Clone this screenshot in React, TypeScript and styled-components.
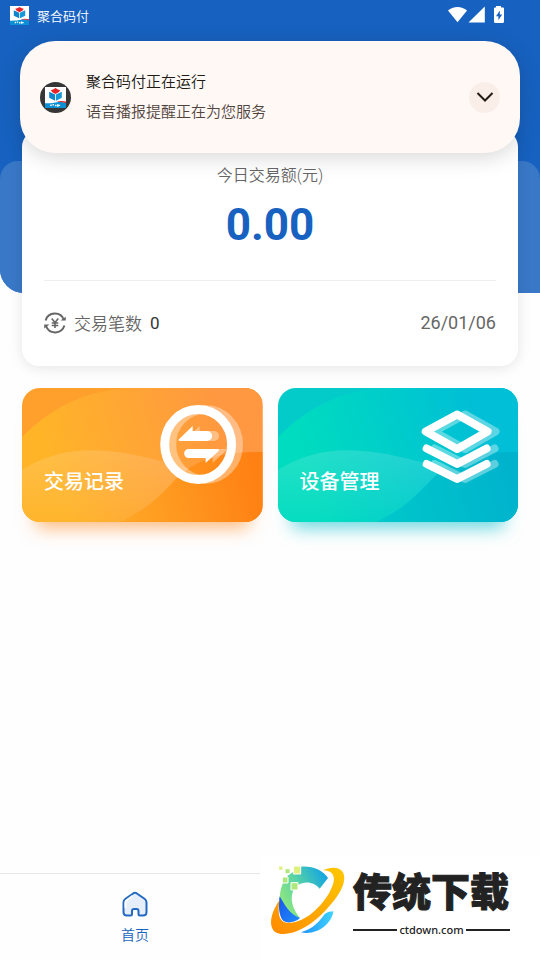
import React from "react";
import styled, { createGlobalStyle } from "styled-components";

const GlobalStyle = createGlobalStyle`
  * { box-sizing: border-box; }
  body {
    margin: 0;
    background: #fefefe;
    font-family: Roboto, "Noto Sans CJK SC", sans-serif;
    font-weight: 350;
  }
  button { font-family: inherit; border: 0; padding: 0; background: none; cursor: pointer; }
`;

const Page = styled.div`
  position: relative;
  min-height: 100vh;
  display: flex;
  flex-direction: column;
`;

const Hero = styled.header`
  display: flex;
  flex-direction: column;
  justify-content: space-between;
  height: 293px;
  background: #1762c0;
  border-bottom-left-radius: 24px;
`;

const StatusBar = styled.div`
  display: flex;
  align-items: center;
  gap: 8px;
  height: 30px;
  padding: 0 36px 0 10px;
  color: #fff;
  font-size: 13px;
`;

const StatusIcons = styled.div`
  display: flex;
  margin-left: auto;
`;

const HeroPanel = styled.div`
  height: 132px;
  background: #3978c7;
  border-radius: 18px 18px 0 24px;
`;

const Main = styled.main`
  position: relative;
  flex: 1;
  display: flex;
  flex-direction: column;
  gap: 22px;
  margin-top: -163px;
  padding: 0 22px;
`;

const Summary = styled.section`
  display: flex;
  flex-direction: column;
  padding: 34px 22px 0;
  border-radius: 17px;
  background: #fff;
  box-shadow: 0 2px 14px rgba(0, 0, 0, 0.1);
  text-align: center;
`;

const SummaryTitle = styled.h1`
  margin: 0;
  color: #666;
  font-size: 16px;
  font-weight: 350;
  line-height: 24px;
`;

const Amount = styled.p`
  margin: 0;
  padding: 11px 0 28px;
  color: #1762c0;
  font-size: 44px;
  font-weight: 700;
  line-height: 53px;
`;

const SummaryRow = styled.div`
  display: flex;
  align-items: center;
  gap: 8px;
  height: 86px;
  padding-bottom: 2px;
  border-top: 1px solid #efefef;
  color: #666;
  font-size: 17px;
`;

const Count = styled.span`
  color: #333;
  font-weight: 400;
`;

const DateText = styled.time`
  margin-left: auto;
  font-size: 18px;
  font-weight: 400;
`;

const Tiles = styled.div`
  display: grid;
  grid-template-columns: 1fr 1fr;
  gap: 15px;
`;

const Tile = styled.button<{ $glow: string }>`
  position: relative;
  display: flex;
  height: 134px;
  padding: 79px 22px 0;
  border-radius: 18px;
  box-shadow: 0 20px 18px -14px ${(p) => p.$glow};
  color: #fff;
  font-size: 20px;
  font-weight: 500;
  line-height: 30px;
`;

const TileArt = styled.svg`
  position: absolute;
  inset: 0;
  width: 100%;
  height: 100%;
  border-radius: 18px;
`;

const TileLabel = styled.span`
  position: relative;
`;

const TabBar = styled.nav`
  display: grid;
  grid-template-columns: 1fr 1fr;
  height: 87px;
  border-top: 1px solid #e6e6e6;
`;

const Tab = styled.a`
  display: flex;
  flex-direction: column;
  align-items: center;
  gap: 6px;
  padding-top: 16px;
  color: #1762c0;
  font-size: 14px;
  line-height: 22px;
  text-decoration: none;
`;

const Notice = styled.aside`
  position: absolute;
  top: 41px;
  left: 20px;
  right: 20px;
  display: flex;
  align-items: center;
  gap: 15px;
  height: 112px;
  padding: 0 20px;
  border-radius: 35px;
  background: #fff8f5;
  box-shadow: 0 4px 22px rgba(0, 0, 0, 0.16);
`;

const Avatar = styled.div`
  display: grid;
  place-items: center;
  width: 31px;
  height: 31px;
  border-radius: 50%;
  background: #363636;
`;

const NoticeText = styled.div`
  flex: 1;
  font-size: 15px;
  line-height: 30px;
  color: #52443d;
`;

const NoticeTitle = styled.div`
  color: #221a15;
`;

const Expand = styled.button`
  display: grid;
  place-items: center;
  width: 31px;
  height: 31px;
  border-radius: 50%;
  background: #faeee9;
`;

const Brand = styled.div`
  position: absolute;
  right: 0;
  bottom: 0;
  display: flex;
  align-items: flex-start;
  gap: 8px;
  width: 280px;
  height: 104px;
  padding: 8px 0 0 9px;
  background: #fff;
  color: #222;
`;

const BrandText = styled.div`
  width: 157px;
  padding-top: 2px;
`;

const BrandName = styled.div`
  font-size: 39px;
  font-weight: 900;
  line-height: 54px;
  -webkit-text-stroke: 1px #222;
`;

const BrandSite = styled.div`
  display: flex;
  align-items: center;
  gap: 2px;
  font-family: "Noto Sans", sans-serif;
  font-size: 11px;
  font-weight: 500;
  line-height: 20px;

  &::before,
  &::after {
    content: "";
    flex: 1;
    height: 2px;
    background: #222;
  }
`;

function AppIcon({ size }: { size: number }) {
  return (
    <svg width={size} height={size} viewBox="0 0 20 20" aria-hidden="true">
      <path fill="#fff" d="M0 0h20v20H0z" />
      <path fill="#0d84cd" d="M4 4.5 9.6 7.2V13L4 10.2z" />
      <path fill="#1597d8" d="M16 4.5v5.7L10.4 13V7.2z" />
      <path fill="#e52329" d="M10 1 12.3 2.3 14.5 3 13 5 10 6.6 7 5 5.500 3 7.700 2.300z" />
      <path fill="#0b8fd5" d="M0 15.5c6 0 9-.3 13-1.5l7 .8V20H0z" />
      <path fill="#e52329" d="M11 14.4c3-1.4 6-1.3 9-.5v1.3c-3-1-6-1.2-9-.8z" />
      <path stroke="#fff" strokeWidth="1.4" d="M5 17.4h1.4m.8-.4h1.4m1 .6H11m1.2-1.2v2.4m1.5-2v1.4" />
    </svg>
  );
}

function Waves({ id, colors }: { id: string; colors: string[] }) {
  const [corner, bright, right, mid, deep] = colors;
  return (
    <>
      <defs>
        <linearGradient id={id + "a"} gradientUnits="userSpaceOnUse" x1="30" y1="80" x2="200" y2="30">
          <stop offset="0" stopColor={bright} />
          <stop offset="1" stopColor={right} />
        </linearGradient>
        <linearGradient id={id + "b"} gradientUnits="userSpaceOnUse" x1="100" y1="130" x2="235" y2="95">
          <stop offset="0" stopColor={mid} />
          <stop offset="1" stopColor={deep} />
        </linearGradient>
        <linearGradient id={id + "c"} x2="0" y2="1">
          <stop offset="0" stopColor="#fff" stopOpacity=".14" />
          <stop offset="1" stopColor="#fff" stopOpacity=".02" />
        </linearGradient>
      </defs>
      <path fill={corner} d="M0 0h241v134H0z" />
      <path fill={`url(#${id}a)`} d="M0 49C34 15 70 1 112 0H241V134H0z" />
      <path fill={`url(#${id}c)`} d="M0 82C40 57 81 58 139 73L180 84 150 134H0z" />
      <path fill={`url(#${id}b)`} d="M98 134C140 115 148 92 168 80 190 66 215 64 241 64V134z" />
    </>
  );
}

function SwapGlyph() {
  return (
    <>
      <ellipse cx="176.500" cy="56.500" rx="33.500" ry="35" fill="none" stroke="currentColor" strokeWidth="9" />
      <path
        fill="currentColor"
        d="M157.500 51 171 38v5h14.500a5 5 0 0 1 0 10H158.500c-2 0-2-1-1-2zM197 63 184 75v-5h-17a4.500 4.500 0 0 1 0-9h29c2 0 2 1 1 2z"
      />
    </>
  );
}

function LayersGlyph() {
  return (
    <g fill="none" stroke="currentColor" strokeWidth="8" strokeLinecap="round" strokeLinejoin="round">
      <path d="M148 43.500 179.500 26.500 210 43.500 179.500 61z" />
      <path d="M149 60.500 179.500 76 209 60.500M149 76 179.500 91 209 76" />
    </g>
  );
}

function BrandMark() {
  return (
    <svg width="76" height="72" viewBox="38 40 228 216" aria-hidden="true">
      <defs>
        <linearGradient id="ring" x1="1" y1="0" x2="0" y2="1">
          <stop offset="0" stopColor="#ffc800" />
          <stop offset="1" stopColor="#ff8a00" />
        </linearGradient>
        <linearGradient id="arc" x1="0" y1=".6" x2="1" y2="0">
          <stop offset="0" stopColor="#8ee681" />
          <stop offset=".4" stopColor="#56d3a5" />
          <stop offset="1" stopColor="#069bf0" />
        </linearGradient>
        <linearGradient id="tail">
          <stop offset="0" stopColor="#1f8ff5" />
          <stop offset="1" stopColor="#3fd4ff" />
        </linearGradient>
        <linearGradient id="base" x2="1" y2="1">
          <stop offset="0" stopColor="#1757e8" />
          <stop offset="1" stopColor="#218cff" />
        </linearGradient>
      </defs>
      <path fill="url(#arc)" d="M132 48C165 44 200 57 215 82L190 114C174 94 146 89 124 104 100 122 99 164 131 202 108 205 89 197 79 178 64 148 69 103 94 75z" />
      <path fill="url(#base)" d="M70 137C84 160 98 191 131 202 115 217 88 220 78 207 68 194 65 163 70 137z" />
      <path fill="url(#tail)" d="M134 245C170 235 191 211 205 190 214 184 222 182 231 182 226 221 182 255 134 245z" />
      <path fill="url(#ring)" d="M70 147C44 185 35 225 55 243 85 262 145 240 190 197 245 145 275 95 260 65 249 47 221 48 200 59 228 58 238 76 230 101 219 136 190 170 160 193 125 218 85 225 73 205 66 193 65 171 70 147z" />
      <g stroke="#fff" strokeWidth="3">
        <path fill="#dff07e" d="M67 46h13v13H67zM111 46h22v24h-22z" />
        <path fill="#aee77c" d="M86 54h15v15H86zM78 79h17v18H78zM104 96h21v22h-21z" />
      </g>
    </svg>
  );
}

export default function App() {
  return (
    <Page>
      <GlobalStyle />
      <Hero>
        <StatusBar>
          <AppIcon size={19} />
          <span>聚合码付</span>
          <StatusIcons>
            <svg width="56" height="18" viewBox="0 0 56 18" fill="#fff" aria-hidden="true">
              <path d="M0 4.500C5-.2 14-.2 19 4.500L9.500 16.200z" />
              <path d="M36.800.5V16.500H20.500z" />
              <path d="M48 0h5v1.500h2Q56 1.500 56 2.500V15.500Q56 17 54.500 17h-7Q46 17 46 15.500V2.500Q46 1.500 47 1.500h1z" />
              <path fill="#1762c0" d="M51.800 4.500v4h2.400L50.400 14.300v-4H48z" />
            </svg>
          </StatusIcons>
        </StatusBar>
        <HeroPanel />
      </Hero>

      <Main>
        <Summary>
          <SummaryTitle>今日交易额(元)</SummaryTitle>
          <Amount>0.00</Amount>
          <SummaryRow>
            <svg width="22" height="22" viewBox="0 0 22 22" fill="none" stroke="#666" strokeWidth="2" aria-hidden="true">
              <path d="M1.600 8.500A9.700 9.700 0 0 1 20 8M20.400 13.500A9.700 9.700 0 0 1 2 14" />
              <path fill="#666" stroke="none" d="M16.500 8.500h5.300V4.800zM5.500 12.500H.2v4z" />
              <path strokeWidth="1.600" d="m7.700 6.500 3.300 4L14.300 6.500M11 10v6M7.700 11h6.600M7.700 13.500h6.600" />
            </svg>
            <span>交易笔数</span>
            <Count>0</Count>
            <DateText>26/01/06</DateText>
          </SummaryRow>
        </Summary>

        <Tiles>
          <Tile type="button" $glow="rgba(255, 140, 40, 0.6)">
            <TileArt viewBox="0 0 241 134" preserveAspectRatio="none" aria-hidden="true">
              <Waves id="orange" colors={["#ff9f2c", "#ffb428", "#ff9840", "#ffa726", "#ff8114"]} />
              <g color="rgba(255,255,255,.36)" transform="translate(7 0)"><SwapGlyph /></g>
              <SwapGlyph />
            </TileArt>
            <TileLabel>交易记录</TileLabel>
          </Tile>
          <Tile type="button" $glow="rgba(0, 190, 205, 0.6)">
            <TileArt viewBox="0 0 241 134" preserveAspectRatio="none" aria-hidden="true">
              <Waves id="teal" colors={["#02cbc9", "#00dcbf", "#00bfd6", "#00c8ca", "#00b3cd"]} />
              <g opacity=".36" transform="translate(8 0)"><LayersGlyph /></g>
              <LayersGlyph />
            </TileArt>
            <TileLabel>设备管理</TileLabel>
          </Tile>
        </Tiles>
      </Main>

      <TabBar>
        <Tab href="#home" aria-current="page">
          <svg width="28" height="28" viewBox="0 0 28 28" aria-hidden="true">
            <path
              fill="#e6eef9"
              stroke="#2469c1"
              strokeWidth="2"
              strokeLinejoin="round"
              d="M4.500 8.800 12.500 3.200Q14 2.200 15.500 3.200L23.500 8.800Q25.500 10.200 25.500 12.500V22Q25.500 25.500 22 25.500H19Q17.500 25.500 17.500 24V21Q17.500 19 15.500 19H13Q11 19 11 21V24Q11 25.500 9.500 25.500H6Q2.500 25.500 2.500 22V12.500Q2.500 10.200 4.500 8.800z"
            />
            <path d="M4.500 18v-5.500q0-1.200 1-2l6-4.500" fill="none" stroke="#fff" strokeWidth="2" />
          </svg>
          首页
        </Tab>
      </TabBar>

      <Notice>
        <Avatar><AppIcon size={21} /></Avatar>
        <NoticeText>
          <NoticeTitle>聚合码付正在运行</NoticeTitle>
          <div>语音播报提醒正在为您服务</div>
        </NoticeText>
        <Expand type="button" aria-label="展开">
          <svg width="18" height="12" viewBox="0 0 18 12" fill="none" stroke="#221a15" strokeWidth="2" aria-hidden="true">
            <path d="m1.500 2 7.500 7.500L16.500 2" />
          </svg>
        </Expand>
      </Notice>

      <Brand>
        <BrandMark />
        <BrandText>
          <BrandName>传统下载</BrandName>
          <BrandSite>ctdown.com</BrandSite>
        </BrandText>
      </Brand>
    </Page>
  );
}
